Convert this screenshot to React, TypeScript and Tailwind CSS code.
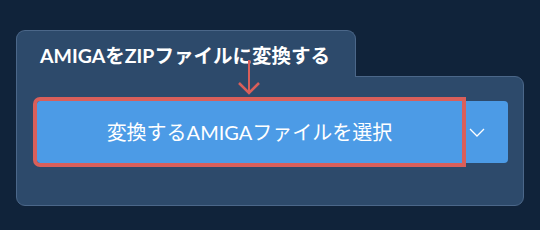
export default function App() {
  return (
    <div
      className="w-[540px] h-[230px] bg-[#10233a] pt-[30px] pl-4"
      style={{ fontFamily: "Lato, 'Noto Sans CJK JP', sans-serif" }}
    >
      <div className="relative w-[508px]">
        <div className="relative z-10 -mb-px w-[340px] h-[47px] bg-[#2d4a6b] border border-b-0 border-[#4b6789] rounded-t-[9px] pl-[23px] pt-[13px]">
          <h1 className="text-[19.5px] leading-[24px] font-bold text-white whitespace-nowrap">
            AMIGAをZIPファイルに変換する
          </h1>
        </div>
        <div className="h-[130px] bg-[#2d4a6b] border border-[#4b6789] rounded-[9px] rounded-tl-none pl-5 pt-6">
          <div className="flex">
            <button className="relative w-[425px] h-[62px] bg-[#4c9be6] rounded-l-[3px] outline-4 outline-[#d95f5a] text-white text-[20px] whitespace-nowrap">
              変換するAMIGAファイルを選択
            </button>
            <button className="w-[46px] h-[62px] bg-[#4c9be6] rounded-r-[4px] flex items-center pl-[7px]">
              <svg width="16" height="9" viewBox="0 0 16 9" fill="none">
                <polyline
                  points="1,1 8,8 15,1"
                  stroke="white"
                  strokeWidth="1.3"
                />
              </svg>
            </button>
          </div>
        </div>
        <svg
          className="absolute left-[219px] top-[30px] z-20"
          width="30"
          height="36"
          viewBox="0 0 30 36"
          fill="none"
        >
          <line x1="14" y1="0" x2="14" y2="34" stroke="#d95f5a" strokeWidth="2" />
          <polyline
            points="4,23 14,33 24,23"
            stroke="#d95f5a"
            strokeWidth="2.5"
          />
        </svg>
      </div>
    </div>
  );
}
